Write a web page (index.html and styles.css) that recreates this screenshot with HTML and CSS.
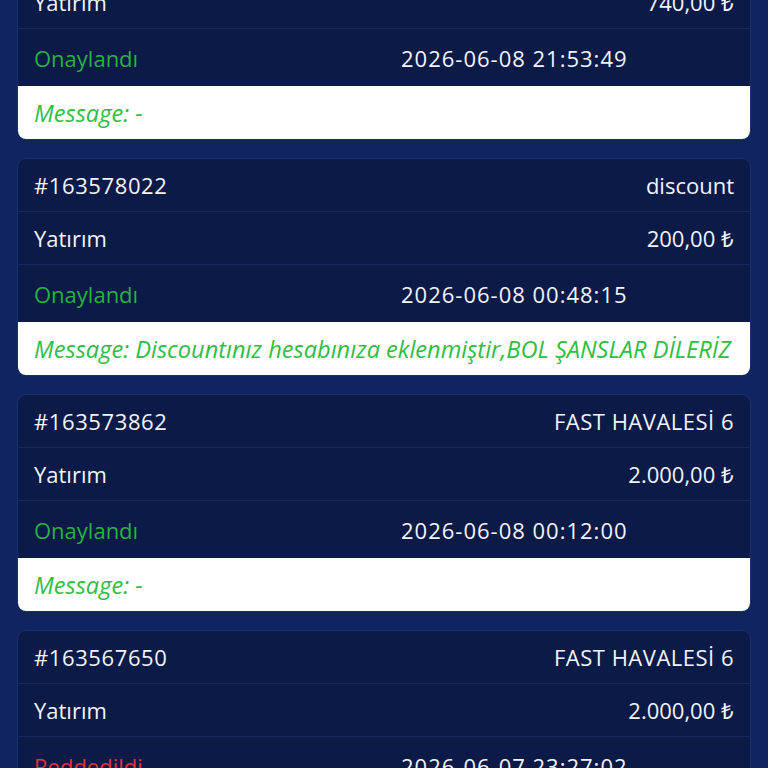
FILE: index.html
```html
<!DOCTYPE html>
<html lang="tr">
<head>
<meta charset="UTF-8">
<meta name="viewport" content="width=device-width, initial-scale=1.0">
<title>Transactions</title>
<link rel="stylesheet" href="styles.css">
</head>
<body>

<div class="list">

  <div class="card">
    <div class="row"><span class="num">#163584410</span><span class="method">FAST HAVALESİ 6</span></div>
    <div class="row"><span>Yatırım</span><span>740,00 ₺</span></div>
    <div class="row status"><span class="ok">Onaylandı</span><span class="date">2026-06-08 21:53:49</span></div>
    <div class="message">Message: -</div>
  </div>

  <div class="card">
    <div class="row"><span class="num">#163578022</span><span>discount</span></div>
    <div class="row"><span>Yatırım</span><span>200,00 ₺</span></div>
    <div class="row status"><span class="ok">Onaylandı</span><span class="date">2026-06-08 00:48:15</span></div>
    <div class="message">Message: Discountınız hesabınıza eklenmiştir,BOL ŞANSLAR DİLERİZ</div>
  </div>

  <div class="card">
    <div class="row"><span class="num">#163573862</span><span class="method">FAST HAVALESİ 6</span></div>
    <div class="row"><span>Yatırım</span><span>2.000,00 ₺</span></div>
    <div class="row status"><span class="ok">Onaylandı</span><span class="date">2026-06-08 00:12:00</span></div>
    <div class="message">Message: -</div>
  </div>

  <div class="card">
    <div class="row"><span class="num">#163567650</span><span class="method">FAST HAVALESİ 6</span></div>
    <div class="row"><span>Yatırım</span><span>2.000,00 ₺</span></div>
    <div class="row status"><span class="fail">Reddedildi</span><span class="date">2026-06-07 23:27:02</span></div>
    <div class="message">Message: -</div>
  </div>

</div>

</body>
</html>
```

FILE: styles.css
```css
body {
  margin: 0;
  background: #112462;
  font-family: "Open Sans", sans-serif;
  color: #f2f4fa;
  overflow: hidden;
}

.list {
  display: flex;
  flex-direction: column;
  gap: 18px;
  padding: 0 17px;
  margin-top: -78px;
}

.card {
  background: #0b1a47;
  border: 1px solid #1b2f6c;
  border-radius: 9px;
  overflow: hidden;
}

.row {
  display: flex;
  justify-content: space-between;
  align-items: center;
  height: 52px;
  padding: 0 16px;
  border-bottom: 1px solid #16285e;
  font-size: 22px;
}

.num {
  letter-spacing: 0.6px;
}

.method {
  letter-spacing: 0.5px;
}

.row.status {
  display: grid;
  grid-template-columns: 1fr 1fr;
  height: 57px;
  border-bottom: none;
}

.row.status .date {
  padding-left: 17px;
  letter-spacing: 1px;
}

.ok {
  color: #27b23f;
}

.fail {
  color: #e0323c;
}

.message {
  background: #ffffff;
  color: #2fbd45;
  font-style: italic;
  font-size: 23.6px;
  height: 53px;
  display: flex;
  align-items: center;
  padding: 0 16px;
  white-space: nowrap;
}
```
